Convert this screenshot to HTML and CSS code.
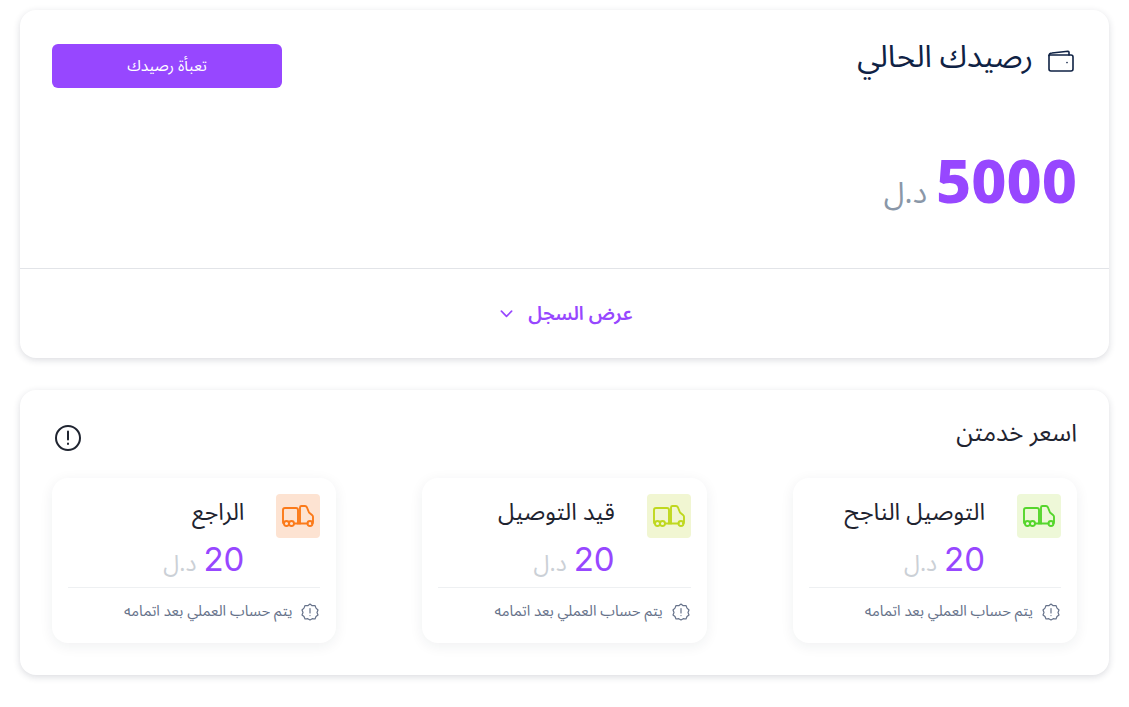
FILE: index.html
```html
<!DOCTYPE html>
<html lang="ar" dir="rtl">
<head>
    <meta charset="UTF-8">
    <meta name="viewport" content="width=device-width, initial-scale=1.0">
    <title>رصيدك الحالي</title>
    <link rel="stylesheet" href="styles.css">
</head>
<body>
    <svg class="defs" width="0" height="0">
        <symbol id="truck" viewBox="0 0 32 22">
            <path d="M2 18.500A1 1 0 0 1 1 17.500V5A2 2 0 0 1 3 3H14A2 2 0 0 1 16 5V18.500" />
            <path d="M12 18.500H25.500" />
            <path d="M18 18.500V2.500A1.500 1.500 0 0 1 19.500 1H23C24 1 24.500 1.500 25 2.500L27 7.500L30 10C30.600 10.500 31 11 31 11.700V17A1.500 1.500 0 0 1 30 18.500" />
            <circle cx="4.500" cy="18.500" r="2.500" />
            <circle cx="9.500" cy="18.500" r="2.500" />
            <circle cx="28" cy="18.500" r="2.500" />
        </symbol>
        <symbol id="badge" viewBox="0 0 18 18">
            <path d="M9 1L11.200 2.700L14 2.500L15 5.100L17 7L16 9.500L17 12L15 13.500L14 16L11.200 15.700L9 17L6.800 15.700L4 16L3 13.500L1 12L2 9.500L1 7L3 5.100L4 2.500L6.800 2.700Z" />
            <path d="M9 5.500V10M9 12.500V12.600" />
        </symbol>
    </svg>

    <section class="card balance">
        <div class="balance-top">
            <div class="balance-head">
                <h1 class="balance-title">
                    <svg class="wallet" viewBox="0 0 26 22">
                        <path d="M1 5.500V19A2 2 0 0 0 3 21H23A2 2 0 0 0 25 19V7A2 2 0 0 0 23 5H1.500" />
                        <path d="M1 5.500A3 3 0 0 1 4 3L20 1.200A1 1 0 0 1 21 2.200V5" />
                        <path d="M19 12.500V12.600" />
                    </svg>
                    رصيدك الحالي
                </h1>
                <button class="topup">تعبأة رصيدك</button>
            </div>
            <p class="balance-amount"><span class="big-num">5000</span> <span class="big-cur">د.ل</span></p>
        </div>
        <div class="balance-foot">
            <span>عرض السجل</span>
            <svg class="chevron" viewBox="0 0 14 8"><path d="M1.500 1L7 6.500L12.500 1" /></svg>
        </div>
    </section>

    <section class="card prices">
        <div class="prices-head">
            <h2 class="prices-title">اسعر خدمتن</h2>
            <svg class="info" viewBox="0 0 28 28">
                <circle cx="14" cy="14" r="12" />
                <path d="M14 7.500V15.500M14 19.500V20" />
            </svg>
        </div>
        <div class="price-grid">
            <div class="price-card">
                <div class="price-main">
                    <span class="truck-box green"><svg class="truck"><use href="#truck" /></svg></span>
                    <div class="price-text">
                        <h3 class="price-name">التوصيل الناجح</h3>
                        <p class="price-value"><span class="num">20</span> <span class="cur">د.ل</span></p>
                    </div>
                </div>
                <p class="price-note"><svg class="badge"><use href="#badge" /></svg>يتم حساب العملي بعد اتمامه</p>
            </div>
            <div class="price-card">
                <div class="price-main">
                    <span class="truck-box lime"><svg class="truck"><use href="#truck" /></svg></span>
                    <div class="price-text">
                        <h3 class="price-name">قيد التوصيل</h3>
                        <p class="price-value"><span class="num">20</span> <span class="cur">د.ل</span></p>
                    </div>
                </div>
                <p class="price-note"><svg class="badge"><use href="#badge" /></svg>يتم حساب العملي بعد اتمامه</p>
            </div>
            <div class="price-card">
                <div class="price-main">
                    <span class="truck-box orange"><svg class="truck"><use href="#truck" /></svg></span>
                    <div class="price-text">
                        <h3 class="price-name">الراجع</h3>
                        <p class="price-value"><span class="num">20</span> <span class="cur">د.ل</span></p>
                    </div>
                </div>
                <p class="price-note"><svg class="badge"><use href="#badge" /></svg>يتم حساب العملي بعد اتمامه</p>
            </div>
        </div>
    </section>
</body>
</html>
```

FILE: styles.css
```css
* {
    box-sizing: border-box;
    margin: 0;
    padding: 0;
}

body {
    font-family: "Noto Sans", "Noto Sans Arabic", sans-serif;
    background-color: #fff;
    min-height: 707px;
    padding: 10px 20px 32px;
    color: #1f2430;
}

.defs {
    position: absolute;
}

.card {
    background: #fff;
    border-radius: 16px;
    box-shadow: 0 2px 7px rgba(30, 40, 60, 0.16);
}

.balance {
    height: 348px;
    margin-bottom: 32px;
}

.balance-top {
    height: 259px;
    padding: 33px 32px 0;
    border-bottom: 1px solid #e2e4e8;
}

.balance-head {
    display: flex;
    justify-content: space-between;
    align-items: flex-start;
}

.balance-title {
    display: flex;
    align-items: center;
    gap: 15px;
    margin-top: -6px;
    font-size: 30.800px;
    font-weight: 400;
    line-height: 28px;
    color: #0f2244;
}

.wallet {
    width: 26px;
    height: 22px;
    margin-top: 13px;
    margin-right: 3px;
    fill: none;
    stroke: #0f2244;
    stroke-width: 1.600;
    stroke-linecap: round;
    stroke-linejoin: round;
}

.topup {
    width: 230px;
    height: 44px;
    margin-top: 1px;
    border: none;
    border-radius: 6px;
    background-color: #9747ff;
    color: #fff;
    font-family: inherit;
    font-size: 15.500px;
}

.balance-amount {
    display: flex;
    align-items: baseline;
    gap: 9px;
    margin-top: 52px;
    line-height: 80px;
}

.big-num {
    font-size: 61px;
    font-weight: 800;
    color: #9747ff;
}

.big-cur {
    font-size: 30px;
    color: #8a97a8;
}

.balance-foot {
    display: flex;
    justify-content: center;
    align-items: center;
    gap: 15px;
    height: 89px;
    padding-left: 4px;
    font-size: 19px;
    font-weight: 600;
    color: #9747ff;
}

.chevron {
    width: 13px;
    height: 8px;
    fill: none;
    stroke: #9747ff;
    stroke-width: 1.800;
    stroke-linecap: round;
    stroke-linejoin: round;
}

.prices {
    height: 285px;
    padding: 28px 32px 0;
}

.prices-head {
    display: flex;
    justify-content: space-between;
    align-items: flex-start;
    height: 60px;
}

.prices-title {
    font-size: 24.400px;
    font-weight: 400;
    line-height: 28px;
}

.info {
    width: 28px;
    height: 28px;
    margin: 6px 0 0 2px;
    fill: none;
    stroke: #1f2430;
    stroke-width: 2;
    stroke-linecap: round;
}

.price-grid {
    display: grid;
    grid-template-columns: repeat(3, 1fr);
    gap: 86px;
}

.price-card {
    height: 165px;
    padding: 16px 16px 0;
    border-radius: 16px;
    box-shadow: 0 3px 14px rgba(30, 40, 60, 0.07);
}

.price-main {
    display: flex;
    gap: 32px;
    height: 94px;
    border-bottom: 1px solid #eef0f2;
}

.truck-box {
    display: flex;
    justify-content: center;
    align-items: center;
    width: 44px;
    height: 44px;
    border-radius: 4px;
}

.truck {
    width: 32px;
    height: 22px;
    fill: none;
    stroke: currentColor;
    stroke-width: 1.900;
    stroke-linejoin: round;
    stroke-linecap: round;
}

.green {
    background: #eef8d8;
    color: #55d62c;
}

.lime {
    background: #f1f6d2;
    color: #bfd81f;
}

.orange {
    background: #fde3d2;
    color: #fb7a1a;
}

.price-name {
    font-size: 23.500px;
    font-weight: 400;
    line-height: 34px;
}

.price-value {
    display: flex;
    align-items: baseline;
    gap: 7px;
    margin-top: 10px;
    line-height: 42px;
}

.num {
    font-family: "Inter", sans-serif;
    font-size: 33px;
    font-weight: 400;
    color: #9747ff;
}

.cur {
    font-size: 23px;
    color: #cbd0d6;
}

.price-note {
    display: flex;
    align-items: center;
    gap: 9px;
    height: 47px;
    font-size: 14.800px;
    color: #66728a;
}

.badge {
    width: 18px;
    height: 18px;
    margin-right: 1px;
    fill: none;
    stroke: #66728a;
    stroke-width: 1.200;
    stroke-linecap: round;
    stroke-linejoin: round;
}
```
